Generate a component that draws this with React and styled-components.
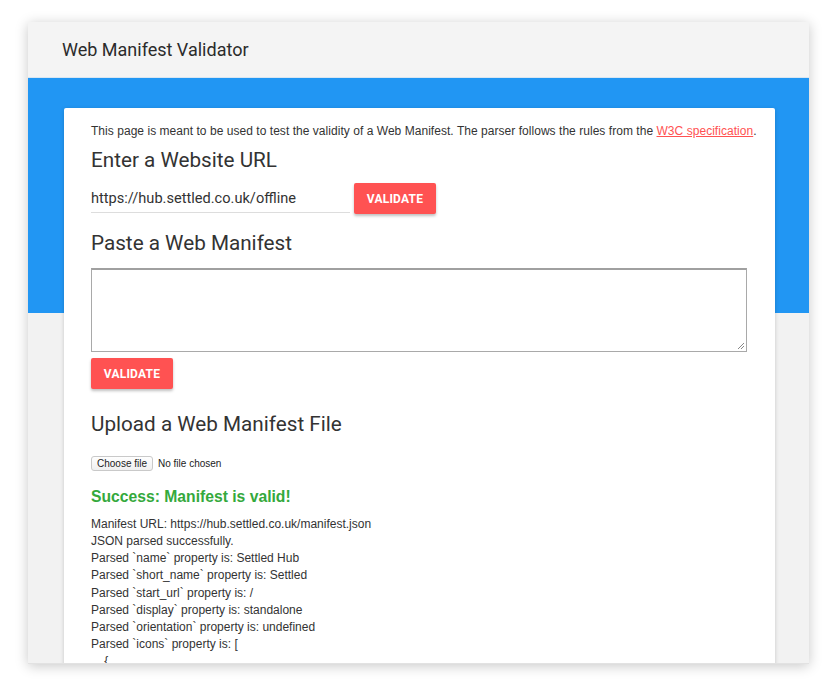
import React from "react";
import styled, { createGlobalStyle } from "styled-components";

const Global = createGlobalStyle`
  html, body { margin: 0; padding: 0; background: #ffffff; }
  body { font-family: "Liberation Sans", Arial, sans-serif; }
  * { box-sizing: border-box; }
`;

const Page = styled.div`
  width: 835px;
  height: 690px;
  padding: 22px 26px 0 28px;
  overflow: hidden;
`;

const Window = styled.div`
  width: 781px;
  height: 642px;
  overflow: hidden;
  display: flex;
  flex-direction: column;
  background: #f2f2f2;
  box-shadow: 0 2px 12px rgba(0, 0, 0, 0.22);
  border-bottom: 1px solid #e2e2e2;
`;

const Header = styled.header`
  height: 56px;
  flex: none;
  background: #f4f4f4;
  display: flex;
  align-items: center;
  padding-left: 34px;
  font-family: Roboto, "Liberation Sans", sans-serif;
  font-size: 18px;
  color: #2b2b2b;
  border-bottom: 1px solid #d8e6f2;
`;

const Main = styled.main`
  flex: 1;
  background: linear-gradient(to bottom, #2196f3 0, #2196f3 235px, #f2f2f2 235px);
  padding: 30px 34px 0 36px;
  overflow: hidden;
`;

const Card = styled.section`
  background: #ffffff;
  min-height: 100%;
  padding: 15px 27px 0 27px;
  box-shadow: 0 1px 4px rgba(0, 0, 0, 0.18);
  border-radius: 2px;
`;

const Intro = styled.p`
  margin: 0;
  font-size: 12px;
  line-height: 16px;
  letter-spacing: 0.04px;
  color: #333;
  white-space: nowrap;
`;

const Link = styled.a`
  color: #ff5252;
  text-decoration: underline;
`;

const Heading = styled.h2`
  margin: ${(p) => p.$mt || 6}px 0 0 0;
  font-family: Roboto, "Liberation Sans", sans-serif;
  font-weight: 400;
  font-size: 20.7px;
  line-height: 26px;
  color: #333;
`;

const UrlRow = styled.div`
  display: flex;
  align-items: center;
  gap: 4px;
  margin-top: 10px;
`;

const UrlInput = styled.div`
  width: 259px;
  height: 28px;
  display: flex;
  align-items: center;
  font-family: Roboto, "Liberation Sans", sans-serif;
  font-size: 14.6px;
  color: #333;
  border-bottom: 1px solid #ddd;
`;

const Button = styled.button`
  width: 82px;
  height: 31px;
  border: none;
  border-radius: 2px;
  background: #ff5252;
  color: #fff;
  font-family: Roboto, "Liberation Sans", sans-serif;
  font-weight: 700;
  font-size: 12px;
  letter-spacing: 0.2px;
  box-shadow: 0 2px 3px rgba(0, 0, 0, 0.25);
  margin-top: ${(p) => p.$mt || 0}px;
  padding: 0;
`;

const TextArea = styled.div`
  margin-top: 12px;
  width: 656px;
  height: 84px;
  border: 1px solid #a9a9a9;
  border-top: 2px solid #a0a0a0;
  position: relative;
`;

const Grip = styled.svg`
  position: absolute;
  right: 1px;
  bottom: 1px;
`;

const FileRow = styled.div`
  display: flex;
  align-items: center;
  gap: 5px;
  margin-top: 19px;
  font-size: 10px;
  color: #222;
`;

const FileButton = styled.span`
  display: inline-flex;
  align-items: center;
  height: 15px;
  padding: 0 5px;
  border: 1px solid #c9c9c9;
  border-radius: 3px;
  background: linear-gradient(#fefefe, #f0f0f0);
  font-size: 10px;
  color: #222;
`;

const Success = styled.div`
  margin-top: 17px;
  font-weight: 700;
  font-size: 15.7px;
  color: #34a93c;
`;

const Output = styled.div`
  margin-top: 10px;
  font-size: 12px;
  line-height: 17.15px;
  color: #333;
  white-space: pre;
`;

const lines = [
  "Manifest URL: https://hub.settled.co.uk/manifest.json",
  "JSON parsed successfully.",
  "Parsed `name` property is: Settled Hub",
  "Parsed `short_name` property is: Settled",
  "Parsed `start_url` property is: /",
  "Parsed `display` property is: standalone",
  "Parsed `orientation` property is: undefined",
  "Parsed `icons` property is: [",
  "    {",
];

export default function App() {
  return (
    <>
      <Global />
      <Page>
        <Window>
          <Header>Web Manifest Validator</Header>
          <Main>
            <Card>
              <Intro>
                This page is meant to be used to test the validity of a Web Manifest. The parser follows the rules from the{" "}
                <Link href="#">W3C specification</Link>.
              </Intro>
              <Heading $mt={8}>Enter a Website URL</Heading>
              <UrlRow>
                <UrlInput>https://hub.settled.co.uk/offline</UrlInput>
                <Button>VALIDATE</Button>
              </UrlRow>
              <Heading $mt={16}>Paste a Web Manifest</Heading>
              <TextArea>
                <Grip width="8" height="8" viewBox="0 0 8 8">
                  <path d="M7 1 L1 7 M7 4 L4 7" stroke="#888" strokeWidth="1" fill="none" />
                </Grip>
              </TextArea>
              <Button $mt={6}>VALIDATE</Button>
              <Heading $mt={22}>Upload a Web Manifest File</Heading>
              <FileRow>
                <FileButton>Choose file</FileButton>
                <span>No file chosen</span>
              </FileRow>
              <Success>Success: Manifest is valid!</Success>
              <Output>
                {lines.map((l, i) => (
                  <div key={i}>{l}</div>
                ))}
              </Output>
            </Card>
          </Main>
        </Window>
      </Page>
    </>
  );
}
